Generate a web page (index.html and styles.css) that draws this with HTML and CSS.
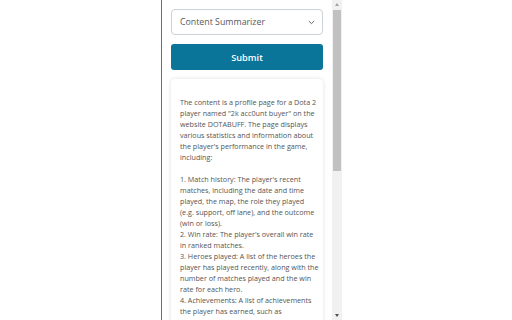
FILE: index.html
```html
<!DOCTYPE html>
<html>
<head>
<meta charset="utf-8">
<link rel="stylesheet" href="styles.css">
</head>
<body>
<div class="stage">
  <div class="frame">
    <div class="content">
      <div class="select">
        <span class="select-label">Content Summarizer</span>
        <svg class="chev" width="7" height="5" viewBox="0 0 7 5"><path d="M0.8 1 L3.5 3.6 L6.2 1" fill="none" stroke="#555" stroke-width="0.9"/></svg>
      </div>
      <div class="btn">Submit</div>
      <div class="card">
        <p class="summary">The content is a profile page for a Dota 2<br>player named "2k acc0unt buyer" on the<br>website DOTABUFF. The page displays<br>various statistics and information about<br>the player's performance in the game,<br>including:<br><br>1. Match history: The player's recent<br>matches, including the date and time<br>played, the map, the role they played<br>(e.g. support, off lane), and the outcome<br>(win or loss).<br>2. Win rate: The player's overall win rate<br>in ranked matches.<br>3. Heroes played: A list of the heroes the<br>player has played recently, along with the<br>number of matches played and the win<br>rate for each hero.<br>4. Achievements: A list of achievements<br>the player has earned, such as</p>
      </div>
    </div>
    <div class="scrollbar">
      <div class="arrow up"></div>
      <div class="track"><div class="thumb"></div></div>
      <div class="arrow down"></div>
    </div>
  </div>
</div>
</body>
</html>
```
FILE: styles.css
```css
html, body {
  margin: 0;
  padding: 0;
  background: #fff;
  overflow: hidden;
}
.stage {
  display: flex;
  padding-left: 161px;
  height: 320px;
}
.frame {
  display: flex;
  width: 181px;
  height: 320px;
  border-left: 1px solid #6e6e6e;
  box-sizing: border-box;
  font-family: "Open Sans", "Noto Sans", sans-serif;
}
.content {
  flex: 1;
  padding: 9px 9px 0 9px;
  display: flex;
  flex-direction: column;
  gap: 9px;
  overflow: hidden;
}
.select {
  height: 26px;
  box-sizing: border-box;
  border: 1px solid #ccd1d6;
  border-radius: 4px;
  display: flex;
  align-items: center;
  justify-content: space-between;
  padding: 0 7px 0 8px;
  flex-shrink: 0;
}
.select-label {
  font-size: 8.8px;
  color: #555a60;
}
.chev { display: block; }
.btn {
  height: 26px;
  flex-shrink: 0;
  background: #0b7499;
  border-radius: 3px;
  color: #fff;
  font-size: 9.2px;
  font-weight: 600;
  display: flex;
  align-items: center;
  justify-content: center;
}
.card {
  background: #fff;
  border-radius: 4px;
  box-shadow: 0 0 4px rgba(0,0,0,0.13);
  padding: 18px 9px;
}
.summary {
  margin: 0;
  font-size: 7.2px;
  line-height: 11px;
  color: #555555;
  white-space: nowrap;
}
.scrollbar {
  width: 10px;
  flex-shrink: 0;
  background: #f1f1f1;
  display: flex;
  flex-direction: column;
}
.arrow {
  height: 9px;
  display: flex;
  align-items: center;
  justify-content: center;
}
.arrow::before {
  content: "";
  border-left: 2.5px solid transparent;
  border-right: 2.5px solid transparent;
}
.arrow.up::before { border-bottom: 3px solid #a3a3a3; }
.arrow.down::before { border-top: 3px solid #505050; }
.track {
  flex: 1;
  padding: 1px 1px;
}
.thumb {
  height: 161px;
  background: #c1c1c1;
}
```
